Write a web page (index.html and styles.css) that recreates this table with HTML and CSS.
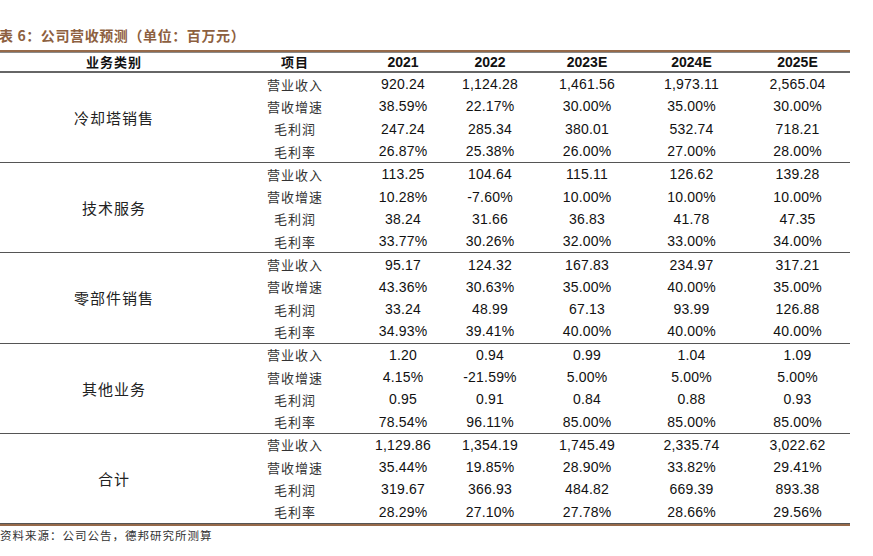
FILE: index.html
```html
<!DOCTYPE html>
<html lang="zh">
<head>
<meta charset="utf-8">
<title>公司营收预测</title>
<link rel="stylesheet" href="styles.css">
</head>
<body>
<div class="title">表 6：公司营收预测（单位：百万元）</div>
<div class="table">
  <div class="head">
    <div class="h cn">业务类别</div>
    <div class="h cn">项目</div>
    <div class="h">2021</div>
    <div class="h">2022</div>
    <div class="h">2023E</div>
    <div class="h">2024E</div>
    <div class="h">2025E</div>
  </div>

  <div class="group">
    <div class="cat">冷却塔销售</div>
    <div class="lbl">营业收入</div><div class="num">920.24</div><div class="num">1,124.28</div><div class="num">1,461.56</div><div class="num">1,973.11</div><div class="num">2,565.04</div>
    <div class="lbl">营收增速</div><div class="num">38.59%</div><div class="num">22.17%</div><div class="num">30.00%</div><div class="num">35.00%</div><div class="num">30.00%</div>
    <div class="lbl">毛利润</div><div class="num">247.24</div><div class="num">285.34</div><div class="num">380.01</div><div class="num">532.74</div><div class="num">718.21</div>
    <div class="lbl">毛利率</div><div class="num">26.87%</div><div class="num">25.38%</div><div class="num">26.00%</div><div class="num">27.00%</div><div class="num">28.00%</div>
  </div>

  <div class="group">
    <div class="cat">技术服务</div>
    <div class="lbl">营业收入</div><div class="num">113.25</div><div class="num">104.64</div><div class="num">115.11</div><div class="num">126.62</div><div class="num">139.28</div>
    <div class="lbl">营收增速</div><div class="num">10.28%</div><div class="num">-7.60%</div><div class="num">10.00%</div><div class="num">10.00%</div><div class="num">10.00%</div>
    <div class="lbl">毛利润</div><div class="num">38.24</div><div class="num">31.66</div><div class="num">36.83</div><div class="num">41.78</div><div class="num">47.35</div>
    <div class="lbl">毛利率</div><div class="num">33.77%</div><div class="num">30.26%</div><div class="num">32.00%</div><div class="num">33.00%</div><div class="num">34.00%</div>
  </div>

  <div class="group">
    <div class="cat">零部件销售</div>
    <div class="lbl">营业收入</div><div class="num">95.17</div><div class="num">124.32</div><div class="num">167.83</div><div class="num">234.97</div><div class="num">317.21</div>
    <div class="lbl">营收增速</div><div class="num">43.36%</div><div class="num">30.63%</div><div class="num">35.00%</div><div class="num">40.00%</div><div class="num">35.00%</div>
    <div class="lbl">毛利润</div><div class="num">33.24</div><div class="num">48.99</div><div class="num">67.13</div><div class="num">93.99</div><div class="num">126.88</div>
    <div class="lbl">毛利率</div><div class="num">34.93%</div><div class="num">39.41%</div><div class="num">40.00%</div><div class="num">40.00%</div><div class="num">40.00%</div>
  </div>

  <div class="group">
    <div class="cat">其他业务</div>
    <div class="lbl">营业收入</div><div class="num">1.20</div><div class="num">0.94</div><div class="num">0.99</div><div class="num">1.04</div><div class="num">1.09</div>
    <div class="lbl">营收增速</div><div class="num">4.15%</div><div class="num">-21.59%</div><div class="num">5.00%</div><div class="num">5.00%</div><div class="num">5.00%</div>
    <div class="lbl">毛利润</div><div class="num">0.95</div><div class="num">0.91</div><div class="num">0.84</div><div class="num">0.88</div><div class="num">0.93</div>
    <div class="lbl">毛利率</div><div class="num">78.54%</div><div class="num">96.11%</div><div class="num">85.00%</div><div class="num">85.00%</div><div class="num">85.00%</div>
  </div>

  <div class="group">
    <div class="cat">合计</div>
    <div class="lbl">营业收入</div><div class="num">1,129.86</div><div class="num">1,354.19</div><div class="num">1,745.49</div><div class="num">2,335.74</div><div class="num">3,022.62</div>
    <div class="lbl">营收增速</div><div class="num">35.44%</div><div class="num">19.85%</div><div class="num">28.90%</div><div class="num">33.82%</div><div class="num">29.41%</div>
    <div class="lbl">毛利润</div><div class="num">319.67</div><div class="num">366.93</div><div class="num">484.82</div><div class="num">669.39</div><div class="num">893.38</div>
    <div class="lbl">毛利率</div><div class="num">28.29%</div><div class="num">27.10%</div><div class="num">27.78%</div><div class="num">28.66%</div><div class="num">29.56%</div>
  </div>
</div>
<div class="source">资料来源：公司公告，德邦研究所测算</div>
</body>
</html>
```

FILE: styles.css
```css
html, body {
  margin: 0;
  padding: 0;
  background: #ffffff;
}

body {
  font-family: "Noto Sans CJK SC", "Liberation Sans", sans-serif;
  color: #222;
}

.title {
  padding-top: 25px;
  margin-left: -1px;
  height: 20px;
  line-height: 20px;
  font-size: 14px;
  font-weight: bold;
  letter-spacing: 0.6px;
  color: #8d6040;
  margin-bottom: 5px;
}

.table {
  width: 850px;
  border-top: 2px solid #966a4a;
  border-bottom: 2px solid #966a4a;
}

.head,
.group {
  display: grid;
  grid-template-columns: 228px 134px 82px 92px 102px 107px 105px;
}

.head {
  height: 18px;
  border-top: 1px solid #8a8a8a;
  border-bottom: 2px solid #666;
  align-items: center;
}

.h {
  text-align: center;
  font-family: "Liberation Sans", Arial, sans-serif;
  font-weight: bold;
  font-size: 14px;
  line-height: 18px;
  color: #111;
}

.h.cn {
  font-family: "Noto Sans CJK SC", sans-serif;
  font-size: 13px;
  letter-spacing: 1px;
}

.group {
  grid-template-rows: repeat(4, 22.3px);
  border-bottom: 1px solid #555;
  align-items: center;
}

.cat {
  grid-row: 1 / span 4;
  grid-column: 1;
  text-align: center;
  font-size: 15px;
  letter-spacing: 1px;
  color: #222;
}

.lbl {
  text-align: center;
  font-size: 13px;
  letter-spacing: 1px;
  color: #333;
}

.num {
  text-align: center;
  font-family: "Liberation Sans", Arial, sans-serif;
  font-size: 14px;
  letter-spacing: 0.2px;
  color: #111;
}

.source {
  margin-top: 1px;
  font-size: 11.5px;
  letter-spacing: 1px;
  color: #333;
  line-height: 16px;
}
```
